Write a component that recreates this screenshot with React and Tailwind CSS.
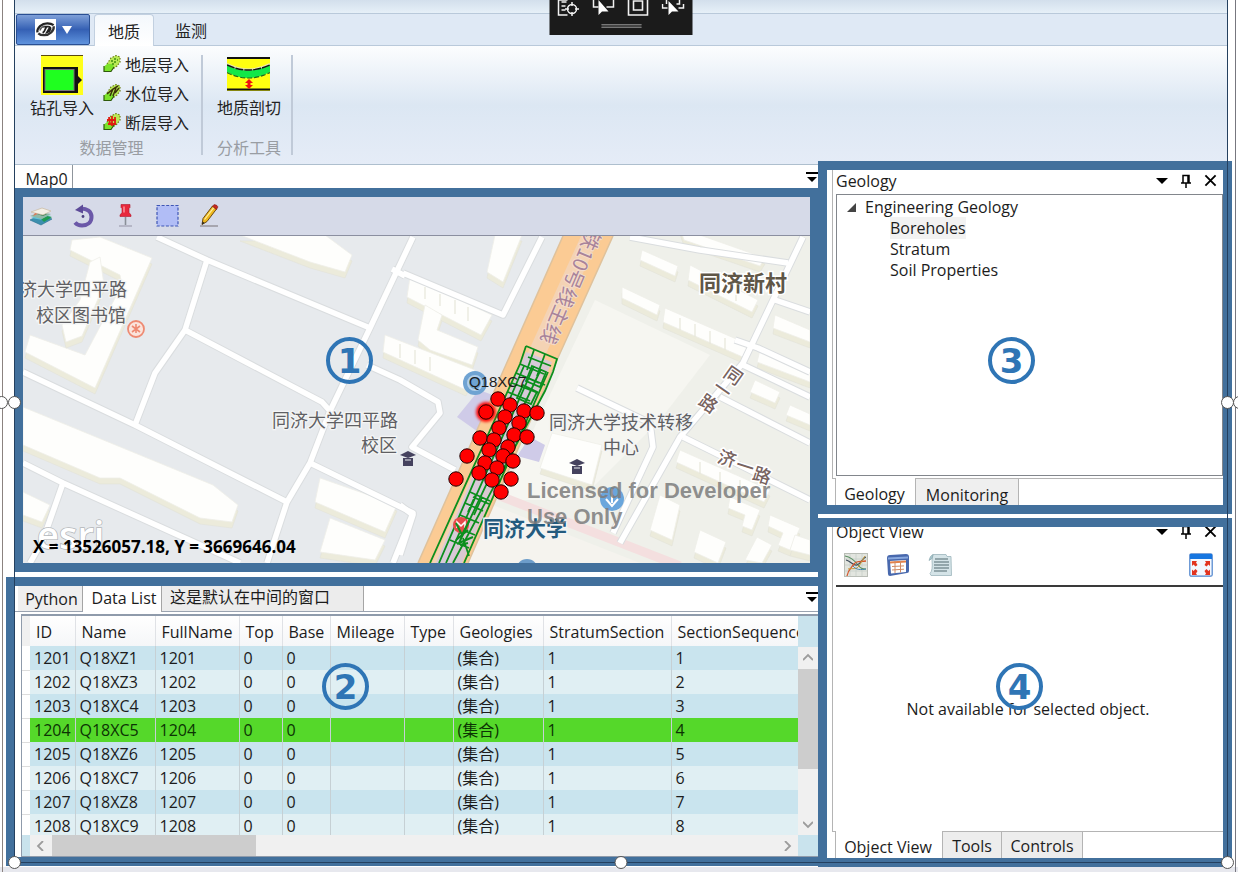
import React from "react";

const LATIN = "font-['Open_Sans','Noto_Sans_CJK_SC',sans-serif]";

/* ---------- icons ---------- */

const LogoIcon = () => (
  <svg viewBox="0 0 22 22" className="h-[21px] w-[21px] bg-white">
    <path d="M2.500 14C2 9 7 4.500 13 4.500c3 0 5 .8 6.500 2" fill="none" stroke="#222" strokeWidth="2.400" />
    <path d="M19.500 7.500C20.500 12 15 17 9.500 17 7 17 5 16.500 3.500 15" fill="none" stroke="#333" strokeWidth="2.400" />
    <path d="M8 8h6.500M12 8c-2 3-1 5-4 6.500M14.500 8c3 1 2 5-2 6l3-5" fill="none" stroke="#222" strokeWidth="1.900" />
    <path d="M5 12c1-2.500 3-4 5-4.500" fill="none" stroke="#555" strokeWidth="1.500" />
  </svg>
);

const BoreholeIcon = () => (
  <svg viewBox="0 0 42 40" className="h-10 w-[42px]">
    <rect width="42" height="40" fill="#ffff1a" />
    <path d="M0 .5h42" stroke="#5a4a10" />
    <path d="M2 12h35v9l4 4-4 4v9H2z" fill="#111" />
    <rect x="4" y="14.500" width="29" height="21" fill="#1fff1f" stroke="#777" strokeWidth="1" />
  </svg>
);

const SectionIcon = () => (
  <svg viewBox="0 0 43 34" className="h-[34px] w-[43px]">
    <rect width="43" height="34" fill="#ffff10" />
    <path d="M0 7q21 12 43 0v8q-21 12-43 0z" fill="#12e848" />
    <path d="M0 7q21 11 43 0" fill="none" stroke="#e8e8b0" strokeWidth="2" />
    <path d="M0 8q21 10 43 0" fill="none" stroke="#111" strokeWidth="1.400" strokeDasharray="8 1" />
    <path d="M0 15.500q21 11 43 0" fill="none" stroke="#1c6a20" strokeWidth="1.200" strokeDasharray="5 2" />
    <path d="M0 1h43M0 32.500h43" stroke="#111" strokeWidth="2" />
    <path d="M22 22l4 4h-2.500v2H26l-4 4-4-4h2.500v-2H18z" fill="#f01010" />
  </svg>
);

const LayerImportIcon = ({ kind }) => (
  <svg viewBox="0 0 18 18" className="h-[18px] w-[18px]">
    <path d="M4 9l4-6 5-2.500 4 1.500v5l-3 4-5 3.500z" fill="#b9ea55" />
    <path d="M4 9l4-6 5-2.500 4 1.500v5l-3 4-5 3.500" fill="none" stroke="#6d7d18" strokeWidth="1.200" strokeDasharray="1.500 1.500" />
    <path d="M1 11.500l3-2.500h5l2 2-2.500 5H1z" fill="#7be32a" />
    <path d="M1 11v5.500h7L11 12" fill="none" stroke="#2e5a0a" strokeWidth="1.200" />
    {kind === "water" && <path d="M4 10l6-5 5-3M7 12l3-7M10 12l3-8M12 9l4-5" stroke="#3b3208" strokeWidth="1.500" fill="none" />}
    {kind === "fault" && <path d="M4 7h9M5 11h8M6 4l1 8M9 3v10M12 4v8" stroke="#e01c10" strokeWidth="1.800" />}
    {kind === "layer" && <path d="M8 6h2M11 4h2M11 7h2M9 9h2M14 5h1" stroke="#3f8f10" strokeWidth="1.400" />}
  </svg>
);

const LayersIcon = () => (
  <svg viewBox="0 0 24 24" className="h-6 w-6">
    <path d="M1 16l10-5 12 4-11 6z" fill="#3c8fae" stroke="#27708e" strokeWidth=".6" />
    <path d="M2 14l10-4 10 2-8 4z" fill="#61c4d6" />
    <path d="M12 15l6-3 5 1-8 5z" fill="#1d9a52" />
    <path d="M1 12l10-4 11 2-9 5z" fill="#8fb8a8" />
    <path d="M8 10l5-2 5 2-4 2z" fill="#2d7a4a" />
    <path d="M2 8l11-4 9 3-8 4z" fill="#f3efe6" stroke="#c9b9a0" strokeWidth=".7" />
    <path d="M4 12l2-3 3 1z" fill="#db7a5a" />
  </svg>
);

const RotateIcon = () => (
  <svg viewBox="0 0 24 24" className="h-6 w-6">
    <path d="M10 4.500c6 0 10.500 3 10.500 8.500s-4 8.500-9.500 8.500q-4.500 0-7-3" fill="none" stroke="#6b58a8" strokeWidth="4" />
    <path d="M4 6l8-5.500v9z" fill="#5c4a98" />
    <circle cx="12" cy="12.500" r="1.400" fill="#4b3f80" />
  </svg>
);

const PinIcon = () => (
  <svg viewBox="0 0 24 24" className="h-6 w-6">
    <path d="M6 22h13" stroke="#aab" strokeWidth="1.500" />
    <path d="M12.500 13v8" stroke="#8a8f98" strokeWidth="1.600" />
    <path d="M8 .5h9v3l-1 1v4l2 2.500v1.500H7V11l2-2.500v-4l-1-1z" fill="#e8283c" stroke="#b0142a" strokeWidth=".6" />
    <path d="M11 2.500v6" stroke="#ff9aa0" strokeWidth="1.400" />
  </svg>
);

const SelectAreaIcon = () => (
  <svg viewBox="0 0 24 24" className="h-6 w-6">
    <rect x="2" y="1.500" width="21" height="20.500" fill="#b1bdf6" stroke="#3f56b5" strokeWidth="1.200" strokeDasharray="3 1.600" />
  </svg>
);

const PencilIcon = () => (
  <svg viewBox="0 0 24 24" className="h-6 w-6">
    <path d="M3 22h18" stroke="#8d8a90" strokeWidth="1.300" />
    <path d="M5 20.500l1-6L15.500 2l4 3L10 17.500z" fill="#efb91e" stroke="#6e4b10" strokeWidth="1" />
    <path d="M7.500 15.500L17 3.300" stroke="#fff0a0" strokeWidth="1.200" />
    <path d="M15.500 2.500L17 .6q3 0 4 2.300L19.500 5.500z" fill="#c52a20" stroke="#7a1510" strokeWidth=".5" />
    <path d="M5 20.500l.6-3 2 1.500z" fill="#222" />
  </svg>
);

const ChartIcon = () => (
  <svg viewBox="0 0 24 24" className="h-6 w-6">
    <rect x=".5" y=".5" width="23" height="23" fill="#e2e5df" stroke="#b9bdb6" />
    <path d="M6 1v22M12 1v22M18 1v22M1 6h22M1 12h22M1 18h22" stroke="#c3cbc6" strokeWidth=".7" />
    <path d="M1 3c6 1 10 5 13 9s5 4 8 4" fill="none" stroke="#5a8f62" strokeWidth="1.200" />
    <path d="M2 7c5 1 7 6 11 5s5-7 9-8" fill="none" stroke="#3b4a57" strokeWidth="1.200" />
    <path d="M3 23c1-6 4-8 7-12s6-2 12-3" fill="none" stroke="#d4582e" strokeWidth="1.300" />
    <path d="M4 16c5-1 8 1 11-3s4-8 6-10" fill="none" stroke="#c99835" strokeWidth="1" />
    <path d="M9 13c3 4 8 4 13 3" fill="none" stroke="#4486ad" strokeWidth="1" />
  </svg>
);

const GridIcon = () => (
  <svg viewBox="0 0 24 24" className="h-6 w-6">
    <path d="M1 5q0-3 3-3l16-1q3 0 3 3v14q0 2-2 2L4 23q-2 0-2-2z" fill="#4868ad" />
    <path d="M2 4.500l20-1v2l-20 1z" fill="#89a9df" />
    <path d="M4 8l16-1v12L5 20.500z" fill="#fff" />
    <path d="M4 9.500l16-1" stroke="#e3814a" strokeWidth="2.200" />
    <path d="M9 8v12M14.500 8v11.500M6 13.500l12-.6M6 17l12-.8" stroke="#d08a64" strokeWidth="1" />
  </svg>
);

const DocIcon = () => (
  <svg viewBox="0 0 24 24" className="h-6 w-6">
    <path d="M5 1.500h13l1 2h4l.5 19H3l-1-2q3-3 2-13z" fill="#d4e3e7" stroke="#9cb5bb" strokeWidth=".8" />
    <path d="M5 1.500q0 5-4 6 1-5 4-6z" fill="#a9c7ce" stroke="#86a4ab" strokeWidth=".6" />
    <path d="M7 6h13M6 9h15M6 12h15M6 15h15M6 18h13" stroke="#536a70" strokeWidth="1.200" />
  </svg>
);

const FitIcon = () => (
  <svg viewBox="0 0 24 24" className="h-6 w-6">
    <rect x=".8" y=".8" width="22.400" height="22.400" rx="1.500" fill="#f3f8ff" stroke="#4d83cc" strokeWidth="1.200" />
    <rect x="1" y="1" width="22" height="5" fill="#1776e0" />
    <g fill="#e2341f">
      <path d="M3 8h5l-1 1.500L8.500 12l-2 1.500-2-2L3 13z" />
      <path d="M21 8h-5l1 1.500-1.500 2.500 2 1.500 2-2L21 13z" />
      <path d="M3 22h5l-1-1.500L8.500 18l-2-2-2 2L3 16.500z" />
      <path d="M21 22h-5l1-1.500-1.500-2.500 2-2 2 2 1.500-1.500z" />
    </g>
  </svg>
);

const MenuArrowIcon = () => (
  <svg viewBox="0 0 12 12" className="h-3 w-3">
    <path d="M0 2h12" stroke="#000" strokeWidth="2" />
    <path d="M1 6h10L6 11z" fill="#000" />
  </svg>
);

const Chevron = ({ d }) => (
  <svg viewBox="0 0 10 10" className="h-[10px] w-[10px]">
    <path d={d} fill="none" stroke="#9c9c9c" strokeWidth="1.800" />
  </svg>
);

/* ---------- ribbon ---------- */

function DebugBar() {
  return (
    <div className="absolute top-0 left-1/2 z-20 ml-0.5 flex h-[35px] -translate-x-1/2 flex-col items-center bg-[#1b1b1b]">
      <div className="flex h-[18px] gap-[11px] px-[7px]">
        <button aria-label="Live visual tree" className="h-[18px] w-6">
          <svg viewBox="0 0 24 18" className="h-[18px] w-6" fill="none" stroke="#f2f2f2" strokeWidth="1.500">
            <path d="M2 0v15h9M5 2h5M5 6h4M5 10h4M2 0h9" />
            <circle cx="15.500" cy="9" r="4.500" />
            <path d="M15.500 2v4M15.500 12v4M8.500 9h4M18.500 9h4" />
          </svg>
        </button>
        <button aria-label="Select element" className="h-[18px] w-6">
          <svg viewBox="0 0 24 18" className="h-[18px] w-6" fill="none" stroke="#f2f2f2" strokeWidth="1.500">
            <path d="M7 7H2V0M15 7h7V0" />
            <path d="M7 0v15l3.500-3.500H17z" fill="#fff" stroke="none" />
          </svg>
        </button>
        <button aria-label="Display layout" className="h-[18px] w-6">
          <svg viewBox="0 0 24 18" className="h-[18px] w-6" fill="none" stroke="#f2f2f2" strokeWidth="1.600">
            <path d="M2 0v15h19V0" />
            <path d="M7 1h9v9H7z" />
          </svg>
        </button>
        <button aria-label="Track focus" className="h-[18px] w-6">
          <svg viewBox="0 0 24 18" className="h-[18px] w-6" fill="none" stroke="#f2f2f2" strokeWidth="1.500">
            <path d="M5 0v4M1 4v4h5M18 0v4h-3M22 4v4h-5" />
            <path d="M7 1v14l3.500-3.500H17z" fill="#fff" stroke="none" />
          </svg>
        </button>
      </div>
      <div className="mt-[6px] h-1 w-10 border-y border-[#777] bg-[#444]" />
    </div>
  );
}

function Ribbon() {
  const imports = [
    ["layer", "地层导入"],
    ["water", "水位导入"],
    ["fault", "断层导入"],
  ];
  return (
    <header className="mr-[11px] ml-[15px] text-base leading-6 text-[#222] font-['Noto_Sans_CJK_SC',sans-serif]">
      <div className="h-[13px] bg-linear-to-b from-[#d3dfec] to-[#e6f0f8]" />
      <div className="flex h-[33px] items-end border-y border-[#b9c9da] bg-[#dfe9f5] pl-px">
        <button aria-label="Application menu" className="flex h-[31px] w-[74px] items-center justify-center gap-[6px] self-start rounded-xs border border-[#2a4f93] bg-linear-to-b from-[#7fa0d8] via-[#3560b4] to-[#5f93dd]">
          <LogoIcon />
          <svg viewBox="0 0 10 8" className="h-2 w-[10px]">
            <path d="M0 0h10L5 8z" fill="#fff" />
          </svg>
        </button>
        <button className="-mb-px ml-1 h-8 w-[60px] rounded-t border border-b-0 border-[#c2d0e0] bg-linear-to-b from-[#f4f8fc] to-white">地质</button>
        <button className="h-8 w-[74px] pt-0.5">监测</button>
      </div>
      <div className="flex h-[119px] items-start border-b border-[#aebfce] bg-linear-to-b from-[#fcfdfe] via-[#dce7f3] to-[#e5ecf7] pl-[7px]">
        <section className="mt-[9px] flex h-[100px] w-[181px] flex-col justify-between border-r-2 border-[#c0cad8]">
          <div className="flex pl-2">
            <button className="flex flex-col items-center">
              <BoreholeIcon />
              <span>钻孔导入</span>
            </button>
            <div className="-mt-[3px] ml-[9px] flex flex-col gap-[5px]">
              {imports.map(([kind, label]) => (
                <button key={kind} className="flex items-center gap-1">
                  <LayerImportIcon kind={kind} />
                  {label}
                </button>
              ))}
            </div>
          </div>
          <h2 className="text-center leading-4 text-[#999da3]">数据管理</h2>
        </section>
        <section className="mt-[9px] flex h-[100px] w-[90px] flex-col items-center justify-between border-r-2 border-[#c0cad8] pl-1">
          <button className="flex flex-col items-center gap-1 pt-0.5">
            <SectionIcon />
            <span>地质剖切</span>
          </button>
          <h2 className="leading-4 text-[#999da3]">分析工具</h2>
        </section>
      </div>
    </header>
  );
}

/* ---------- map ---------- */

const ROADS = [
  "157,237 207,260 370,328",
  "207,260 185,330 155,373 135,425",
  "185,330 322,402 330,411",
  "23,372 135,425 287,502",
  "413,237 370,328 330,411 310,463 287,502 267,563",
  "23,463 63,483 240,563",
  "63,483 43,540 30,563",
  "310,463 413,513 393,563",
  "367,365 400,380 438,402 440,413 412,447 455,470",
  "403,273 503,315 542,237",
  "392,269 405,276",
  "630,237 700,250 788,263",
  "803,237 773,300 743,363 680,437 620,543",
  "775,300 810,312",
  "735,340 758,348 810,372",
  "743,365 810,397",
  "720,397 810,443",
  "683,437 810,500",
  "577,388 650,423 653,447 613,533",
  "400,505 413,515 400,555",
];

const BUILDINGS = [
  "72,240 100,237 152,258 95,388 25,352 30,335 85,355 122,285 120,275 70,250",
  "90,262 100,257 104,285 82,336 66,342 62,325 80,300",
  "23,407 213,485 238,505 232,522 200,518 120,478 100,478 23,445",
  "240,235 325,235 352,255 345,272 310,262",
  "23,492 50,505 42,522 23,515",
  "320,478 397,505 385,532 315,502",
  "330,518 385,540 375,560 320,552",
  "495,235 522,235 503,282 487,272",
  "410,277 492,315 481,335 407,297",
  "425,305 442,315 437,330 478,347 472,365 430,350 418,340",
  "385,335 475,370 466,390 383,352",
  "642,250 678,266 675,276 640,260",
  "622,287 660,305 657,315 622,298",
  "665,308 750,345 745,358 663,322",
  "680,228 765,258 760,266 684,240",
  "690,265 758,300 752,312 688,280",
  "775,315 810,330 810,342 773,328",
  "760,350 810,370 810,382 757,362",
  "755,380 780,392 775,403 750,392",
  "790,405 810,414 810,425 786,415",
  "680,450 770,490 764,502 676,462",
  "660,495 680,505 672,540 650,530",
  "552,433 602,445 592,485 540,468",
  "730,497 760,510 752,530 742,526 745,515 728,508",
  "700,530 726,542 718,563 694,552",
  "770,515 800,528 790,550 778,545 783,533 768,526",
  "757,537 772,545 762,563 745,560",
  "795,535 810,540 810,555 790,550",
];

const BOREHOLES = [
  [498, 399], [510, 405], [524, 411], [537, 413], [505, 417], [519, 423], [499, 428], [514, 435],
  [527, 437], [480, 438], [494, 440], [508, 447], [489, 450], [503, 456], [467, 456], [513, 461],
  [485, 463], [497, 468], [479, 473], [511, 479], [456, 479], [492, 480], [501, 492], [486, 412],
];

const CapMark = ({ x, y }) => (
  <g transform={`translate(${x} ${y})`} fill="#45425e">
    <path d="M-8-4L0-8 8-4 0-1z" />
    <path d="M-5-1h10v8H-5z" />
    <path d="M-3 1h6" stroke="#e8ebee" strokeWidth="1" />
  </g>
);

function MapCanvas() {
  return (
    <svg viewBox="23 236 787 327" className="block w-full font-['Noto_Sans_CJK_SC',sans-serif]" role="img" aria-label="Map view">
      <defs>
        <filter id="halo" x="-50%" y="-50%" width="200%" height="200%">
          <feGaussianBlur stdDeviation="1.800" />
        </filter>
      </defs>
      <rect x="23" y="236" width="787" height="327" fill="#e7eaed" />
      <path d="M613 236H810V563H440z" fill="#eff0ea" />
      <path d="M595 300L710 355 660 420 580 500 500 500z" fill="#f6f6f1" />
      <path d="M480 500L640 563H450z" fill="#f5f3ee" />
      <path d="M500 496L680 566" stroke="#f4dfdf" strokeWidth="9" fill="none" />
      <path d="M457 417l22-27 22 8-20 36zM530 437l15 8-6 17-22-6z" fill="#cfcbe8" />
      {BUILDINGS.map((p) => (
        <g key={p}>
          <polygon points={p} fill="#ecebdb" stroke="#e3e3d8" strokeWidth=".6" transform="translate(0 6)" />
          <polygon points={p} fill="#fefefc" stroke="#efefe8" strokeWidth=".8" />
        </g>
      ))}
      <path d="M700 272v12M712 277v13M724 283v12M736 288v13M680 318v12M695 324v13M710 331v13M725 338v12M700 462v12M720 472v12M740 480v12M425 287v12M440 294v12M455 300v14M468 307v14M400 344v14M415 350v14M430 357v14" stroke="#e6e6da" strokeWidth="1.200" />
      <g fill="none" strokeLinejoin="round">
        {ROADS.map((p) => (
          <polyline key={p} points={p} stroke="#dadddf" strokeWidth="7.500" />
        ))}
        {ROADS.map((p) => (
          <polyline key={p} points={p} stroke="#fff" strokeWidth="5.500" />
        ))}
      </g>
      <path d="M563 236H613L557 360 468 563H418z" fill="#fbcb94" />
      <path d="M581 236H600L450 563H432z" fill="#f4d3b4" />
      <path d="M563 236L418 563M613 236L557 360 468 563" fill="none" stroke="#dfc29c" strokeWidth="1.500" />
      <text transform="translate(588 228) rotate(113)" fontSize="20" fill="#a8839a" stroke="#f4dccb" strokeWidth="2" paintOrder="stroke">铁10号线主线</text>

      <path d="M526 352l26 10-90 201h-26z" fill="#cdc7e6" opacity=".75" />
      <g fill="none" stroke="#0b8f1d" strokeWidth="1.800">
        <path d="M526 346l31 13-4 13-8 19-92 172M526 346l-6 18-90 199M534 366L446 563M541 369L462 536M548 372l-84 191M524 366L439 563" />
        <path d="M520 364l24 10M521 375l24 10M516 373l23 10M512 383l26 10M534 350l-7 20M545 354l-8 22M528 357l23 9M508 392l22 9M532 366l14 6-6 15-14-6zM523 385l14 7-6 12-14-6z" />
        <path d="M470 492l20 9M473 497l16 7M476 494l-8 18M482 497l-8 18M465 503l18 8M460 515l19 8M455 527l20 8M450 540l19 8M463 538l6 18" />
      </g>
      <circle cx="461" cy="525" r="8" fill="#e74b4b" />
      <path d="M457 528v-6l4 4 4-4v6" fill="none" stroke="#fff" strokeWidth="1.500" />
      <path d="M456 523l6 12 8-16-11 24 14-6M456 540l12-10M460 545l8-2" fill="none" stroke="#0b8f1d" strokeWidth="2" />

      <circle cx="475" cy="383" r="12" fill="#6fa3d2" />
      <circle cx="475" cy="383" r="7" fill="none" stroke="#b3d0ea" strokeWidth="2" />
      <circle cx="612" cy="499" r="12" fill="#6aa6dc" />
      <path d="M612 489v14M606 499l6 7 6-7" fill="none" stroke="#fff" strokeWidth="2" />
      <circle cx="527" cy="570" r="11" fill="#6d9dca" />
      <circle cx="136" cy="329" r="8" fill="#fbe4dc" stroke="#ee8a72" strokeWidth="1.800" />
      <path d="M132 326l8 6M140 326l-8 6M136 324v9" stroke="#ee8a72" strokeWidth="1.600" />
      <CapMark x={408} y={459} />
      <CapMark x={577} y={467} />

      <g fill="#5f5f63" stroke="#f4f5f5" strokeWidth="2.500" paintOrder="stroke" fontSize="18">
        <text x="127" y="296" textAnchor="end">济大学四平路</text>
        <text x="126" y="322" textAnchor="end">校区图书馆</text>
        <text x="398" y="427" textAnchor="end">同济大学四平路</text>
        <text x="397" y="452" textAnchor="end">校区</text>
        <text x="621" y="429" textAnchor="middle">同济大学技术转移</text>
        <text x="621" y="454" textAnchor="middle">中心</text>
      </g>
      <text x="699" y="291" fontSize="22" fontWeight="700" fill="#5f5647" stroke="#fff" strokeWidth="3" paintOrder="stroke">同济新村</text>
      <g fill="#77635f" stroke="#fff" strokeWidth="3" paintOrder="stroke" fontSize="18" fontWeight="500" textAnchor="middle">
        <text transform="translate(733 376) rotate(35)" dy="6">同</text>
        <text transform="translate(722 390) rotate(35)" dy="6">一</text>
        <text transform="translate(708 404) rotate(35)" dy="6">路</text>
        <text transform="translate(727 459) rotate(18)" dy="6">济</text>
        <text transform="translate(745 467) rotate(18)" dy="6">一</text>
        <text transform="translate(762 476) rotate(18)" dy="6">路</text>
      </g>
      <text x="483" y="536" fontSize="21" fontWeight="700" fill="#245b7e" stroke="#f4f4f4" strokeWidth="3" paintOrder="stroke">同济大学</text>
      <g fontSize="22" fontWeight="700" fill="#7c7c7c" fillOpacity=".85" className="font-['Liberation_Sans',sans-serif]">
        <text x="527" y="498">Licensed for Developer</text>
        <text x="527" y="524">Use Only</text>
      </g>

      <circle cx="486" cy="412" r="10" fill="#ff0000" filter="url(#halo)" />
      {BOREHOLES.map(([x, y]) => (
        <circle key={`${x}-${y}`} cx={x} cy={y} r="7.200" fill="#ff0000" stroke="#200" strokeWidth="1" />
      ))}
      <text x="469" y="387" fontSize="15" fill="#1b1b1b" className="font-['Liberation_Sans',sans-serif]">Q18XC7</text>

      <text x="37" y="549" fontSize="38" fontWeight="600" fill="#fff" stroke="#b4b7ba" strokeWidth="1.500" paintOrder="stroke" className="font-['Open_Sans',sans-serif]">esri</text>
      <text x="33" y="553" fontSize="17" fontWeight="700" fill="#000" className="font-['Open_Sans',sans-serif]">X = 13526057.18, Y = 3669646.04</text>
    </svg>
  );
}

function MapPanel() {
  const tools = [
    ["Layers", LayersIcon],
    ["Reset rotation", RotateIcon],
    ["Pin", PinIcon],
    ["Select area", SelectAreaIcon],
    ["Draw", PencilIcon],
  ];
  return (
    <section className="relative ml-2 border-[9px] border-r-8 border-[#42709c]">
      <div className="flex h-[39px] items-center gap-[18px] border-b border-[#8b8fa0] bg-[#d6dae8] pl-[6px]">
        {tools.map(([label, Icon]) => (
          <button key={label} aria-label={label} className="h-6 w-6">
            <Icon />
          </button>
        ))}
      </div>
      <MapCanvas />
      <Badge className="top-[140px] left-[303px]">1</Badge>
    </section>
  );
}

function Badge({ className, children }) {
  return (
    <span className={`absolute z-10 flex h-[47px] w-[47px] items-center justify-center rounded-full border-4 border-[#2f75b5] text-[34px] leading-none font-bold text-[#2f75b5] font-['DejaVu_Sans',sans-serif] ${className}`}>
      {children}
    </span>
  );
}

/* ---------- data list ---------- */

const COLUMNS = ["ID", "Name", "FullName", "Top", "Base", "Mileage", "Type", "Geologies", "StratumSection", "SectionSequence"];

const ROWS = [
  ["1201", "Q18XZ1"],
  ["1202", "Q18XZ3"],
  ["1203", "Q18XC4"],
  ["1204", "Q18XC5"],
  ["1205", "Q18XZ6"],
  ["1206", "Q18XC7"],
  ["1207", "Q18XZ8"],
  ["1208", "Q18XC9"],
].map(([id, name], i) => [id, name, id, "0", "0", "", "", "(集合)", "1", String(i + 1)]);

function DataPanel() {
  return (
    <section className="relative mt-[5px] border-[9px] border-r-0 border-[#42709c] bg-white">
      <div className="flex h-[26px] items-stretch border-b border-[#9aa3b0] pl-[3px]">
        <button className="w-[65px] border-r border-[#a5a5a5] bg-[#efefef] pl-[3px]">Python</button>
        <button className="-mb-px w-[79px] border-r border-[#a5a5a5] bg-white pb-1 pl-1">Data List</button>
        <button className="w-[202px] border-r border-[#a5a5a5] bg-[#ececec] pb-1 pl-2 text-left leading-5">这是默认在中间的窗口</button>
        <button aria-label="Window list" className="ml-auto pb-1">
          <MenuArrowIcon />
        </button>
      </div>
      <div className="mt-[2px] ml-[6px] grid grid-cols-[minmax(0,1fr)_20px] border-t-2 border-b border-l border-[#8f9bab] bg-[#c9e3ed]">
        <div className="h-[219px] overflow-hidden">
          <table className="w-full table-fixed border-collapse">
            <colgroup>
              <col className="w-2" />
              <col className="w-[45px]" />
              <col className="w-20" />
              <col className="w-[84px]" />
              <col className="w-[43px]" />
              <col className="w-12" />
              <col className="w-[74px]" />
              <col className="w-[49px]" />
              <col className="w-[90px]" />
              <col className="w-32" />
              <col />
            </colgroup>
            <thead>
              <tr className="h-[30px] bg-linear-to-b from-white to-[#f5f6f8]">
                <th className="bg-[#f0f0f0] p-0" />
                {COLUMNS.map((c) => (
                  <th key={c} className="overflow-hidden border-r border-[#e0e2e6] p-0 pt-0.5 pl-[6px] text-left font-normal whitespace-nowrap last:border-r-0">{c}</th>
                ))}
              </tr>
            </thead>
            <tbody>
              {ROWS.map((row, i) => (
                <tr key={row[0]} className={i === 3 ? "h-6 bg-[#55d82a] text-[#0c3304]" : i % 2 ? "h-6 bg-[#e0eff3]" : "h-6 bg-[#c9e4ee]"}>
                  <td className="border-b border-[#ddd] bg-white p-0" />
                  {row.map((v, k) => (
                    <td key={k} className="border-r border-[#c6d0d4] p-0 pl-1 leading-5 whitespace-nowrap last:border-r-0">{v}</td>
                  ))}
                </tr>
              ))}
            </tbody>
          </table>
        </div>
        <div className="flex flex-col pt-[31px]">
          <div className="flex flex-1 flex-col items-center bg-[#f0f0f0]">
            <button aria-label="Scroll up" className="flex h-[22px] items-center"><Chevron d="M0 7l5-5 5 5" /></button>
            <div className="h-[100px] w-full bg-[#cdcdcd]" />
            <button aria-label="Scroll down" className="mt-auto flex h-[22px] items-center"><Chevron d="M0 3l5 5 5-5" /></button>
          </div>
        </div>
        <div className="ml-2 flex h-[21px] items-center bg-[#f0f0f0]">
          <button aria-label="Scroll left" className="flex w-[22px] justify-center"><Chevron d="M7 0L2 5l5 5" /></button>
          <div className="h-full w-[204px] bg-[#cdcdcd]" />
          <button aria-label="Scroll right" className="ml-auto flex w-[22px] justify-center"><Chevron d="M3 0l5 5-5 5" /></button>
        </div>
        <div />
      </div>
      <Badge className="top-[77px] left-[307px]">2</Badge>
    </section>
  );
}

/* ---------- docked panes ---------- */

function PaneTitle({ children, className = "" }) {
  return (
    <div className={`flex h-6 shrink-0 items-center pr-[6px] pb-[3px] pl-[3px] ${className}`}>
      <h2 className="mr-auto leading-5">{children}</h2>
      <div className="flex items-center gap-3">
        <button aria-label="Pane menu">
          <svg viewBox="0 0 12 12" className="h-3 w-3"><path d="M0 3h12L6 9z" fill="#000" /></svg>
        </button>
        <button aria-label="Auto hide">
          <svg viewBox="0 0 12 14" className="h-[14px] w-3" fill="none" stroke="#000" strokeWidth="1.500">
            <path d="M3 9V1.500h6V9M1 9h10M6 9v5M8 2v7" />
          </svg>
        </button>
        <button aria-label="Close pane">
          <svg viewBox="0 0 14 14" className="h-[13px] w-[13px]" stroke="#000" strokeWidth="2"><path d="M1.500 1.500l11 11M12.500 1.500l-11 11" /></svg>
        </button>
      </div>
    </div>
  );
}

function GeologyPane() {
  return (
    <section className="relative flex h-[353px] flex-col border-[9px] border-[#42709c] bg-white pl-[5px]">
      <div className="flex min-h-0 flex-1 flex-col border-b border-l border-[#b4b4b4] pb-[2px]">
        <PaneTitle>Geology</PaneTitle>
        <div className="ml-[3px] flex-1 border border-[#82868c] pt-[2px] leading-[21px]">
          <ul>
            <li>
              <div className="flex items-center">
                <button aria-label="Collapse Engineering Geology" className="flex w-7 justify-center">
                  <svg viewBox="0 0 9 9" className="h-[9px] w-[9px]"><path d="M9 0v9H0z" fill="#444" /></svg>
                </button>
                <span>Engineering Geology</span>
              </div>
              <ul className="pl-[53px]">
                <li><span className="bg-[#f2f2f2]">Boreholes</span></li>
                <li>Stratum</li>
                <li>Soil Properties</li>
              </ul>
            </li>
          </ul>
        </div>
      </div>
      <div className="flex h-[26px] pl-[3px]">
        <button className="-mt-px w-20 border-l border-[#b4b4b4] bg-white pt-1 pr-[2px]">Geology</button>
        <button className="w-[104px] border-x border-[#b4b4b4] bg-[#efefef] pt-1">Monitoring</button>
      </div>
      <Badge className="top-[167px] left-[161px]">3</Badge>
    </section>
  );
}

function ObjectPane() {
  return (
    <section className="relative mt-1 flex flex-1 flex-col border-[9px] border-[#42709c] bg-white pl-[5px]">
      <div className="flex flex-1 flex-col overflow-hidden border-b border-l border-[#b4b4b4]">
        <PaneTitle className="-mt-[6px]">Object View</PaneTitle>
        <div className="ml-[3px] flex h-[42px] items-center gap-[18px] border-b-2 border-[#3a3a3a] pr-[10px] pl-2">
          <button aria-label="Chart" className="h-6 w-6"><ChartIcon /></button>
          <button aria-label="Table" className="h-6 w-6"><GridIcon /></button>
          <button aria-label="Text" className="h-6 w-6"><DocIcon /></button>
          <button aria-label="Fit to window" className="ml-auto h-6 w-6"><FitIcon /></button>
        </div>
        <p className="flex flex-1 items-center justify-center">Not available for selected object.</p>
      </div>
      <div className="flex h-[26px] pl-[3px]">
        <button className="-mt-px w-[107px] border-l border-[#b4b4b4] bg-white pt-1 pr-[2px]">Object View</button>
        <button className="w-[59px] border-l border-[#b4b4b4] bg-[#ededed] pt-0.5">Tools</button>
        <button className="w-[82px] border-x border-[#b4b4b4] bg-[#ededed] pt-0.5">Controls</button>
      </div>
      <Badge className="top-[136px] left-[169px]">4</Badge>
    </section>
  );
}

/* ---------- selection outline ---------- */

const Handle = ({ className }) => (
  <span className={`absolute h-[13px] w-[13px] rounded-full border border-[#555] bg-white ${className}`} />
);

function SelectionOutline() {
  return (
    <div className="pointer-events-none absolute inset-0 z-20 overflow-hidden">
      <div className="absolute inset-y-0 left-[2px] w-px bg-[#8b8380]" />
      <div className="absolute inset-y-0 right-[2px] w-px bg-[#77777f]" />
      <div className="absolute top-0 right-[10px] bottom-[9px] left-[14px] border border-t-0 border-[#24405f]">
        <Handle className="top-[396px] -left-[7px]" />
        <Handle className="top-[396px] -left-[20px]" />
        <Handle className="top-[396px] -right-[7px]" />
        <Handle className="top-[396px] -right-[19px]" />
        <Handle className="-bottom-[7px] -left-[7px]" />
        <Handle className="-bottom-[7px] left-1/2 -translate-x-1/2" />
        <Handle className="-right-[7px] -bottom-[7px]" />
      </div>
    </div>
  );
}

export default function App() {
  return (
    <div className={`relative flex min-h-screen flex-col bg-white text-base leading-6 text-[#1c1c1c] ${LATIN}`}>
      <DebugBar />
      <Ribbon />
      <main className="grid flex-1 grid-cols-[minmax(0,1fr)_414px] px-[6px]">
        <div>
          <div className="ml-[9px] flex h-[23px] items-stretch">
            <button className="w-[58px] border-r border-[#8f959c] pt-0.5 pl-[6px]">Map0</button>
            <button aria-label="Map window list" className="ml-auto">
              <MenuArrowIcon />
            </button>
          </div>
          <MapPanel />
          <DataPanel />
        </div>
        <div className="-mt-1 flex flex-col">
          <GeologyPane />
          <ObjectPane />
        </div>
      </main>
      <footer className="h-[5px] bg-[#e7e8ee]" />
      <SelectionOutline />
    </div>
  );
}
